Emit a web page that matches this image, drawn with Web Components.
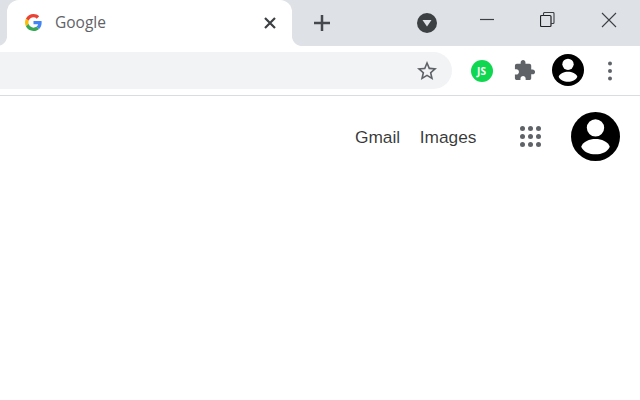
<!DOCTYPE html>
<html>
<head>
<meta charset="utf-8">
<title>Google</title>
<style>
  html, body { margin: 0; padding: 0; background: #fff; overflow: hidden; }
  body { width: 640px; height: 400px; font-family: "Liberation Sans", Arial, sans-serif; }
</style>
</head>
<body>
<chrome-tabstrip>
  <chrome-tab title-text="Google"></chrome-tab>
</chrome-tabstrip>
<chrome-toolbar></chrome-toolbar>
<google-bar></google-bar>

<script>
const avatarSvg = (size) => `
  <svg width="${size}" height="${size}" viewBox="0 0 48 48" style="display:block">
    <circle cx="24" cy="24" r="24" fill="#000"/>
    <circle cx="24" cy="15.5" r="8.5" fill="#fff"/>
    <path d="M10 34C14 24 34 24 38 34C34 44 14 44 10 34z" fill="#fff"/>
  </svg>`;

class ChromeTabstrip extends HTMLElement {
    constructor() {
        super();
        this.attachShadow({ mode: 'open' });
    }

    connectedCallback() {
        this.shadowRoot.innerHTML = `
            <style>
                :host {
                    display: flex;
                    align-items: stretch;
                    height: 46px;
                    padding-left: 7px;
                    padding-right: 1px;
                    background: #dee1e6;
                }
                .plus {
                    width: 59px;
                    display: flex;
                    align-items: center;
                    justify-content: center;
                }
                .drop {
                    margin-left: 62px;
                    width: 28px;
                    display: flex;
                    align-items: center;
                    justify-content: center;
                }
                .controls {
                    display: flex;
                    margin-left: auto;
                }
                .controls div {
                    width: 61px;
                    height: 40px;
                    display: flex;
                    align-items: center;
                    justify-content: center;
                }
            </style>
            <slot></slot>
            <div class="plus">
                <svg width="20" height="20" viewBox="0 0 20 20"><path d="M10 2v16M2 10h16" stroke="#45494e" stroke-width="2.500" fill="none"/></svg>
            </div>
            <div class="drop">
                <svg width="20" height="20" viewBox="0 0 20 20"><circle cx="10" cy="10" r="10" fill="#3c4043"/><path d="M5.500 7h9L10 13.500z" fill="#dee1e6"/></svg>
            </div>
            <div class="controls">
                <div><svg width="16" height="16" viewBox="0 0 16 16"><path d="M1 7.500h14" stroke="#3c4043" stroke-width="1.200"/></svg></div>
                <div><svg width="16" height="16" viewBox="0 0 16 16"><rect x=".5" y="3.500" width="10.500" height="11" rx="1" stroke="#202124" stroke-width="1.200" fill="none"/><path d="M3.500 3.500v-2a1 1 0 0 1 1-1h8.500a1 1 0 0 1 1 1v9a1 1 0 0 1-1 1h-2" stroke="#3c4043" stroke-width="1.100" fill="none"/></svg></div>
                <div><svg width="16" height="16" viewBox="0 0 16 16"><path d="M1 1l14 14M15 1L1 15" stroke="#3c4043" stroke-width="1.100"/></svg></div>
            </div>
        `;
    }
}

class ChromeTab extends HTMLElement {
    constructor() {
        super();
        this.attachShadow({ mode: 'open' });
    }

    connectedCallback() {
        const title = this.getAttribute('title-text') || '';
        this.shadowRoot.innerHTML = `
            <style>
                :host {
                    display: flex;
                    align-items: center;
                    position: relative;
                    box-sizing: border-box;
                    width: 285px;
                    height: 46px;
                    padding: 0 15px 0 18px;
                    background: #fff;
                    border-radius: 12px 12px 0 0;
                }
                /* the little curves at the foot of the tab */
                :host::before, :host::after {
                    content: '';
                    position: absolute;
                    bottom: 0;
                    width: 10px;
                    height: 10px;
                    background: radial-gradient(circle at var(--cx) 0, #dee1e6 9.600px, #fff 10.400px);
                }
                :host::before { left: -10px; --cx: 0; }
                :host::after { right: -10px; --cx: 100%; }
                .title {
                    flex: 1;
                    margin: -2px 0 0 13px;
                    font: 15.500px "Open Sans", sans-serif;
                    color: #5f6368;
                }
                svg { display: block; }
                .favicon { margin-top: -1px; }
            </style>
            <svg class="favicon" width="17" height="17" viewBox="0 0 48 48">
                <path fill="#EA4335" d="M24 9.500c3.540 0 6.710 1.220 9.210 3.600l6.850-6.850C35.900 2.380 30.470 0 24 0 14.620 0 6.510 5.380 2.560 13.220l7.980 6.190C12.430 13.720 17.740 9.500 24 9.500z"/>
                <path fill="#4285F4" d="M46.980 24.550c0-1.570-.15-3.090-.38-4.550H24v9.020h12.940c-.58 2.960-2.260 5.480-4.780 7.180l7.730 6c4.510-4.180 7.090-10.360 7.090-17.650z"/>
                <path fill="#FBBC05" d="M10.530 28.590c-.48-1.450-.76-2.990-.76-4.590s.27-3.140.76-4.590l-7.980-6.190C.92 16.460 0 20.120 0 24c0 3.880.92 7.540 2.560 10.780l7.970-6.190z"/>
                <path fill="#34A853" d="M24 48c6.480 0 11.930-2.130 15.890-5.810l-7.730-6c-2.150 1.450-4.920 2.300-8.160 2.300-6.260 0-11.570-4.220-13.470-9.910l-7.980 6.190C6.510 42.620 14.620 48 24 48z"/>
            </svg>
            <span class="title">${title}</span>
            <svg width="14" height="14" viewBox="0 0 14 14"><path d="M2 2l10 10M12 2L2 12" stroke="#3c4043" stroke-width="2.200"/></svg>
        `;
    }
}

class ChromeToolbar extends HTMLElement {
    constructor() {
        super();
        this.attachShadow({ mode: 'open' });
    }

    connectedCallback() {
        this.shadowRoot.innerHTML = `
            <style>
                :host {
                    display: flex;
                    align-items: center;
                    box-sizing: border-box;
                    height: 50px;
                    background: #fff;
                    border-bottom: 1px solid #dadce0;
                }
                .omnibox {
                    box-sizing: border-box;
                    width: 452px;
                    height: 37px;
                    padding-right: 13px;
                    display: flex;
                    align-items: center;
                    justify-content: flex-end;
                    background: #f1f3f4;
                    border-radius: 0 19px 19px 0;
                }
                .actions {
                    display: flex;
                    align-items: center;
                    margin-left: 18.500px;
                }
                .js {
                    width: 22px;
                    height: 22px;
                    border-radius: 50%;
                    background: #0fd850;
                    color: #fff;
                    font: bold 10px "Open Sans", sans-serif;
                    display: flex;
                    align-items: center;
                    justify-content: center;
                }
                .puzzle { margin-left: 20.500px; }
                .avatar { margin: -2px 0 0 16px; }
                .more { margin-left: 23px; }
                svg { display: block; }
            </style>
            <div class="omnibox">
                <svg width="24" height="24" viewBox="0 0 24 24"><path d="M22 9.240l-7.190-.620L12 2 9.190 8.630 2 9.240l5.460 4.730L5.820 21 12 17.270 18.180 21l-1.630-7.030L22 9.240zM12 15.400l-3.760 2.270 1-4.280-3.320-2.880 4.380-.380L12 6.100l1.710 4.040 4.380.380-3.320 2.880 1 4.280L12 15.400z" fill="#5f6368"/></svg>
            </div>
            <div class="actions">
                <div class="js">JS</div>
                <svg class="puzzle" width="23" height="23" viewBox="0 0 24 24"><path d="M20.500 11H19V7c0-1.100-.9-2-2-2h-4V3.500C13 2.120 11.880 1 10.500 1S8 2.120 8 3.500V5H4c-1.100 0-1.990.9-1.990 2v3.800H3.500c1.490 0 2.700 1.210 2.700 2.700s-1.210 2.700-2.700 2.700H2V20c0 1.100.9 2 2 2h3.800v-1.500c0-1.490 1.210-2.700 2.700-2.700 1.490 0 2.700 1.210 2.700 2.700V22H17c1.100 0 2-.9 2-2v-4h1.500c1.380 0 2.500-1.120 2.500-2.500S21.880 11 20.500 11z" fill="#5f6368"/></svg>
                <div class="avatar">${avatarSvg(32)}</div>
                <svg class="more" width="6" height="20" viewBox="0 0 6 20"><circle cx="3" cy="2.500" r="2" fill="#5f6368"/><circle cx="3" cy="10" r="2" fill="#5f6368"/><circle cx="3" cy="17.500" r="2" fill="#5f6368"/></svg>
            </div>
        `;
    }
}

class GoogleBar extends HTMLElement {
    constructor() {
        super();
        this.attachShadow({ mode: 'open' });
    }

    connectedCallback() {
        const dots = Array.from({ length: 9 }, () => '<i></i>').join('');
        this.shadowRoot.innerHTML = `
            <style>
                :host {
                    display: flex;
                    align-items: center;
                    justify-content: flex-end;
                    height: 50px;
                    margin-top: 15px;
                    padding-right: 20px;
                }
                a {
                    margin-top: 2px;
                    font: 17.330px "Liberation Sans", Arial, sans-serif;
                    color: rgba(0, 0, 0, .78);
                    text-decoration: none;
                }
                a + a { margin-left: 19.500px; }
                .apps {
                    display: grid;
                    grid-template-columns: repeat(3, 5px);
                    gap: 3px;
                    margin: 1px 30.500px 0 43px;
                }
                .apps i {
                    width: 5px;
                    height: 5px;
                    border-radius: 50%;
                    background: #5f6368;
                }
            </style>
            <a>Gmail</a>
            <a>Images</a>
            <div class="apps">${dots}</div>
            ${avatarSvg(49)}
        `;
    }
}

customElements.define('chrome-tabstrip', ChromeTabstrip);
customElements.define('chrome-tab', ChromeTab);
customElements.define('chrome-toolbar', ChromeToolbar);
customElements.define('google-bar', GoogleBar);
</script>
</body>
</html>
